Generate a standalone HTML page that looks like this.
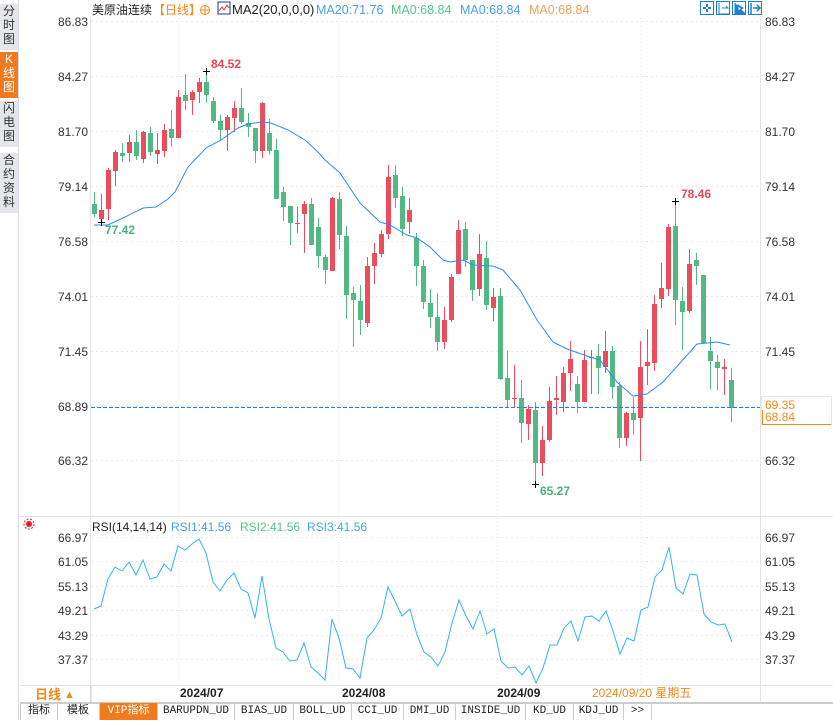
<!DOCTYPE html>
<html><head><meta charset="utf-8"><style>
body{margin:0;width:833px;height:720px;overflow:hidden;background:#fff;font-family:"Liberation Sans","Noto Sans CJK SC",sans-serif;position:relative}
.side{position:absolute;left:0;top:0;width:18px;height:720px;background:#fff;border-right:1px solid #d8dce4}
.tab{position:absolute;left:0;width:18px;background:#e4e6ec;color:#333;font-size:12px;line-height:14px;text-align:center}
.bt{position:absolute;top:703px;height:17px;border-right:1px solid #ccc;font-size:11px;line-height:17px;text-align:center;color:#222;font-family:"Liberation Mono","Noto Sans CJK SC",monospace}
</style></head><body>
<div class="side"></div>
<div class="tab" style="top:4px;height:46px">分<br>时<br>图</div>
<div class="tab" style="top:52px;height:46px;background:#f07a1c;color:#fff">K<br>线<br>图</div>
<div class="tab" style="top:101px;height:46px">闪<br>电<br>图</div>
<div class="tab" style="top:153px;height:60px">合<br>约<br>资<br>料</div>
<svg id="s" width="833" height="720" style="position:absolute;left:0;top:0" font-family="Liberation Sans, Noto Sans CJK SC, sans-serif"></svg>
<div style="position:absolute;left:20px;top:703px;width:813px;height:17px;border-top:1px solid #ccc;background:#fff"></div>
<div class="bt" style="left:20px;width:36px;border-left:1px solid #ccc">指标</div>
<div class="bt" style="left:57px;width:42px">模板</div>
<div class="bt" style="left:100px;width:57px;background:#f07a1c;color:#fff">VIP指标</div>
<div class="bt" style="left:158px;width:76px">BARUPDN_UD</div>
<div class="bt" style="left:235px;width:58px">BIAS_UD</div>
<div class="bt" style="left:294px;width:57px">BOLL_UD</div>
<div class="bt" style="left:352px;width:51px">CCI_UD</div>
<div class="bt" style="left:404px;width:51px">DMI_UD</div>
<div class="bt" style="left:456px;width:69px">INSIDE_UD</div>
<div class="bt" style="left:526px;width:47px">KD_UD</div>
<div class="bt" style="left:574px;width:49px">KDJ_UD</div>
<div class="bt" style="left:624px;width:27px">&gt;&gt;</div>
<script>
var s='';
function t(x,y,txt,c,sz,a,w){s+='<text x="'+x+'" y="'+y+'" fill="'+c+'" font-size="'+(sz||12)+'"'+(a?' text-anchor="'+a+'"':'')+(w?' font-weight="bold"':'')+'>'+txt+'</text>';}
s+='<line x1="90.5" y1="18" x2="90.5" y2="705" stroke="#dfe3ea"/>';
s+='<line x1="760.5" y1="18" x2="760.5" y2="705" stroke="#dfe3ea"/>';
s+='<line x1="20" y1="516.5" x2="833" y2="516.5" stroke="#dfe3ea"/>';
s+='<line x1="20" y1="685.5" x2="833" y2="685.5" stroke="#dfe3ea"/>';
var py=[[86.83,21],[84.27,76],[81.70,131],[79.14,186],[76.58,241],[74.01,296],[71.45,351],[68.89,406],[66.32,460]];
py.forEach(function(p){s+='<line x1="91" y1="'+p[1]+'.5" x2="760" y2="'+p[1]+'.5" stroke="#e8e8e8" stroke-dasharray="2,3"/>';t(88,p[1]+5,p[0].toFixed(2),'#333',12,'end');if(p[0]!=68.89)t(765,p[1]+5,p[0].toFixed(2),'#333',12);});
var ry=[['66.97',537],['61.05',561],['55.13',586],['49.21',610],['43.29',635],['37.37',659]];
ry.forEach(function(p){s+='<line x1="91" y1="'+p[1]+'.5" x2="760" y2="'+p[1]+'.5" stroke="#e8e8e8" stroke-dasharray="2,3"/>';t(88,p[1]+5,p[0],'#333',12,'end');t(765,p[1]+5,p[0],'#333',12);});
[178,338,497,640].forEach(function(x){s+='<line x1="'+x+'.5" y1="18" x2="'+x+'.5" y2="685" stroke="#e8e8e8" stroke-dasharray="1,3"/>';});
var C=[[94,204,214,192,217,0],[101,210,219,194,220,1],[108,170,209,168,220,1],[115,152,171,150,186,1],[122,153,156,143,162,0],[129,142,153,135,162,1],[136,142,156,130,160,0],[143,132,159,131,163,1],[150,133,152,127,156,0],[157,150,154,133,164,1],[164,130,151,124,157,1],[171,129,138,110,147,0],[178,97,138,90,138,1],[185,95,101,74,110,0],[192,92,100,90,115,1],[199,82,92,78,103,1],[206,82,95,71,103,0],[213,101,121,97,123,0],[220,121,130,115,140,0],[227,117,130,115,151,1],[234,108,118,101,132,1],[241,108,122,88,124,0],[248,123,127,113,137,0],[255,128,151,128,163,0],[262,103,151,102,158,1],[269,133,151,119,155,0],[276,150,199,139,199,0],[283,192,207,187,221,0],[290,206,223,206,245,0],[297,223,224,207,233,1],[304,204,214,201,253,1],[311,204,245,198,245,0],[318,227,256,218,268,0],[325,257,270,255,284,0],[332,198,271,197,271,1],[339,199,235,192,249,0],[346,236,295,226,319,0],[353,293,300,287,347,0],[360,301,320,285,335,0],[367,266,323,257,327,1],[374,253,266,243,284,1],[381,234,254,230,257,1],[388,177,234,165,239,1],[395,175,198,165,208,0],[402,196,229,187,236,0],[409,210,222,198,234,1],[416,238,266,233,286,0],[423,266,302,260,309,0],[430,303,317,289,328,0],[437,317,342,293,351,0],[444,320,342,307,349,1],[451,277,320,274,322,1],[458,230,274,220,274,1],[465,229,260,222,267,0],[472,260,290,260,301,0],[479,254,289,234,296,1],[486,258,305,241,310,0],[493,297,308,288,321,1],[500,296,379,288,380,0],[507,378,400,351,408,0],[514,398,399,365,408,1],[521,398,423,380,443,0],[528,409,424,405,440,1],[535,410,463,402,484,0],[542,440,463,426,476,1],[549,401,440,387,442,1],[556,398,400,376,415,1],[563,373,402,367,412,1],[570,359,373,341,391,1],[577,384,402,376,413,0],[584,360,402,350,402,1],[591,357,358,350,394,1],[598,356,368,344,394,0],[605,351,367,331,373,1],[612,351,387,346,399,0],[619,386,438,382,448,0],[626,413,438,412,446,1],[633,413,420,397,435,0],[640,367,418,341,461,1],[647,362,366,329,385,1],[654,304,363,295,371,1],[661,288,299,263,308,1],[668,227,289,224,296,1],[675,226,300,201,325,0],[682,301,312,287,350,0],[689,264,311,249,313,1],[696,260,266,253,285,0],[703,275,343,275,343,0],[710,351,361,337,389,0],[717,362,368,355,390,0],[724,367,369,359,395,1],[731,380,408,368,422,0]];
C.forEach(function(c){var col=c[5]?'#ea4e5c':'#52b884';s+='<line x1="'+(c[0]+.5)+'" y1="'+c[3]+'" x2="'+(c[0]+.5)+'" y2="'+c[4]+'" stroke="'+col+'"/>';s+='<rect x="'+(c[0]-2)+'" y="'+c[1]+'" width="5" height="'+Math.max(1,c[2]-c[1])+'" fill="'+col+'"/>';});
s+='<polyline fill="none" stroke="#2d8cf0" stroke-width="1" points="94,225 108,225 125,217 143,208 156,207 168,199 175,192 188,167 206,148 221,140 238,128 248,124 261,122 271,123 288,130 305,140 318,152 325,160 340,173 360,203 380,222 390,225 407,235 417,238 430,247 443,260 450,262 463,260 473,265 493,266 503,270 520,290 537,320 553,342 567,349 587,356 600,360 617,382 633,396 647,394 663,382 680,363 697,344 717,342 730,345"/>';
s+='<line x1="91" y1="407.5" x2="760" y2="407.5" stroke="#1a7ef5" stroke-width="1" stroke-dasharray="4,2"/>';
s+='<rect x="761.5" y="396.5" width="70" height="28" fill="#fff" stroke="#e4e8ec"/>';
t(765,409,'69.35','#f08a1c',12);
s+='<line x1="762" y1="424.5" x2="831" y2="424.5" stroke="#f08a1c"/><line x1="762.5" y1="410" x2="762.5" y2="424" stroke="#f08a1c"/>';
t(765,421,'68.84','#f08a1c',12);
function cross(x,y){s+='<path d="M'+(x-3)+' '+y+'.5h7M'+x+'.5 '+(y-3)+'v7" stroke="#000"/>';}
cross(206,71);t(211,68,'84.52','#e8465a',12,0,1);
cross(101,222);t(105,234,'77.42','#4ab07a',12,0,1);
cross(675,201);t(681,198,'78.46','#e8465a',12,0,1);
cross(535,484);t(540,495,'65.27','#4ab07a',12,0,1);
s+='<polyline fill="none" stroke="#33b5e8" points="94,609 101,606 108,579 115,567 122,571 129,562 136,575 143,560 150,579 157,577 164,564 171,571 178,546 185,550 192,544 199,539 206,553 213,582 220,591 227,580 234,573 241,589 248,593 255,618 262,576 269,619 276,648 283,652 290,661 297,660 304,643 311,667 318,673 325,680 332,619 339,638 346,668 353,669 360,678 367,638 374,630 381,618 388,587 395,601 402,616 410,609 417,635 424,652 431,657 438,666 445,652 452,623 459,600 466,616 473,629 480,611 487,634 494,629 501,661 508,668 515,667 522,675 529,666 536,683 543,668 550,645 557,645 564,628 571,621 578,641 585,617 592,616 599,621 606,611 613,631 620,654 627,638 634,641 641,610 648,607 655,577 662,570 669,547 676,588 683,594 690,574 697,575 704,614 711,622 718,625 725,624 732,642"/>';
t(92,14,'美原油连续','#222',12);
t(153,14,'【日线】','#f08a1c',12);
s+='<circle cx="205" cy="10" r="4.5" fill="none" stroke="#f08a1c"/><path d="M200.5 10h9M205 5.5v9" stroke="#f08a1c"/>';
s+='<rect x="218" y="2" width="12" height="12" fill="#fff" stroke="#1a3a8a"/><path d="M219 11l3-4 2 3 3-5 2 3" stroke="#d33" fill="none"/>';
t(232,14,'MA2(20,0,0,0)','#222',13);
t(316,14,'MA20:71.76','#4a9ef0',12.5);
t(391,14,'MA0:68.84','#55c48a',12.5);
t(460,14,'MA0:68.84','#4a9ef0',12.5);
t(529,14,'MA0:68.84','#f0a060',12.5);
[700,716,732,748].forEach(function(x,i){s+='<rect x="'+(x+.5)+'" y="1.5" width="13" height="13" fill="#fff" stroke="#1a7fd0"/>';});
s+='<path d="M703 8h8M707 4v8" stroke="#1a7fd0" stroke-width="2" stroke-dasharray="3,2"/>';
s+='<path d="M719 3v11h11M722 8h6l-2-2M726 10" stroke="#1a7fd0" fill="none"/>';
s+='<path d="M735 3v11h11M738 5l5 3-5 3z" stroke="#1a7fd0" fill="#1a7fd0"/>';
s+='<path d="M751 3v11M753 8h6M757 5l3 3-3 3" stroke="#1a7fd0" fill="none" stroke-width="1.5"/>';
s+='<circle cx="29" cy="524" r="3" fill="#e02020"/><circle cx="29" cy="524" r="5" fill="none" stroke="#e02020" stroke-dasharray="2,1.5"/>';
t(92,531,'RSI(14,14,14)','#222',12);
t(171,531,'RSI1:41.56','#4a9ef0',12);
t(240,531,'RSI2:41.56','#55c48a',12);
t(307,531,'RSI3:41.56','#3aaee0',12);
s+='<line x1="91" y1="686" x2="91" y2="703" stroke="#ccc"/>';
t(35,699,'日线','#f08a1c',13,0,1);t(64,698,'▲','#f08a1c',11);
t(180,697,'2024/07','#222',12,0,1);t(342,697,'2024/08','#222',12,0,1);t(497,697,'2024/09','#222',12,0,1);
t(592,697,'2024/09/20 星期五','#f08a1c',12);
s+='<line x1="20" y1="702.5" x2="833" y2="702.5" stroke="#ccc"/>';
document.getElementById('s').innerHTML=s;
</script>
</body></html>
